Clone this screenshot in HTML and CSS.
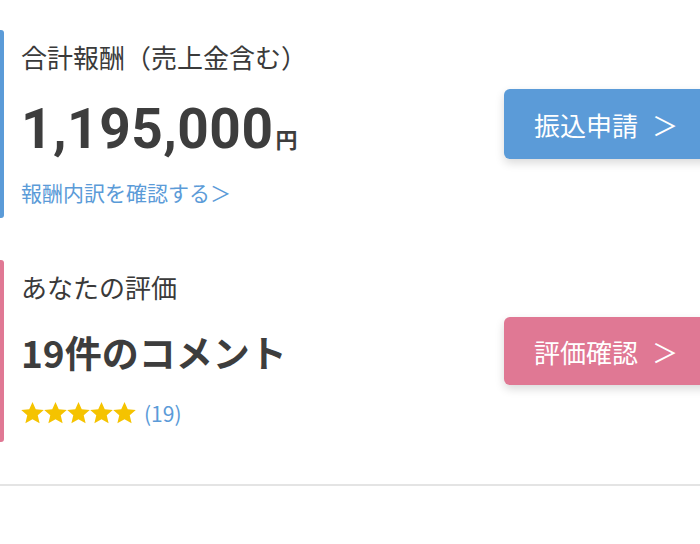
FILE: index.html
```html
<!DOCTYPE html>
<html lang="ja">
<head>
<meta charset="utf-8">
<link rel="stylesheet" href="styles.css">
</head>
<body>
<div class="page">
  <section class="card">
    <div class="bar bar-blue"></div>
    <div class="content">
      <div class="label">合計報酬（売上金含む）</div>
      <div class="amount">1,195,000<span class="yen">円</span></div>
      <a class="link">報酬内訳を確認する＞</a>
    </div>
    <div class="btn btn-blue">振込申請<span class="chev">＞</span></div>
  </section>
  <section class="card card2">
    <div class="bar bar-pink"></div>
    <div class="content">
      <div class="label">あなたの評価</div>
      <div class="comments">19件のコメント</div>
      <div class="rating">
        <span class="stars">
          <svg class="star" viewBox="1 1.2 22 21"><path d="M12 1.2l3.1 7 7.7.6-5.8 5.1 1.8 7.6L12 17.6l-6.8 3.9 1.8-7.6-5.8-5.1 7.7-.6z"/></svg>
          <svg class="star" viewBox="1 1.2 22 21"><path d="M12 1.2l3.1 7 7.7.6-5.8 5.1 1.8 7.6L12 17.6l-6.8 3.9 1.8-7.6-5.8-5.1 7.7-.6z"/></svg>
          <svg class="star" viewBox="1 1.2 22 21"><path d="M12 1.2l3.1 7 7.7.6-5.8 5.1 1.8 7.6L12 17.6l-6.8 3.9 1.8-7.6-5.8-5.1 7.7-.6z"/></svg>
          <svg class="star" viewBox="1 1.2 22 21"><path d="M12 1.2l3.1 7 7.7.6-5.8 5.1 1.8 7.6L12 17.6l-6.8 3.9 1.8-7.6-5.8-5.1 7.7-.6z"/></svg>
          <svg class="star" viewBox="1 1.2 22 21"><path d="M12 1.2l3.1 7 7.7.6-5.8 5.1 1.8 7.6L12 17.6l-6.8 3.9 1.8-7.6-5.8-5.1 7.7-.6z"/></svg>
        </span>
        <span class="count">(19)</span>
      </div>
    </div>
    <div class="btn btn-pink">評価確認<span class="chev">＞</span></div>
  </section>
  <hr class="divider">
</div>
</body>
</html>
```
FILE: styles.css
```css
html, body {
  margin: 0;
  padding: 0;
  background: #fff;
}
body {
  font-family: "Noto Sans CJK JP", "Noto Sans", sans-serif;
  color: #3c3c3c;
  width: 700px;
  height: 544px;
  overflow: hidden;
}
.page {
  padding-top: 30px;
}
.card {
  display: flex;
  align-items: stretch;
  height: 188px;
}
.card2 {
  margin-top: 42px;
  height: 182px;
}
.bar {
  width: 4px;
  border-radius: 0 3px 3px 0;
  flex: none;
}
.bar-blue { background: #5b9bd8; }
.bar-pink { background: #e07894; }
.content {
  flex: 1;
  padding-left: 17px;
  display: flex;
  flex-direction: column;
}
.label {
  font-size: 26px;
  line-height: 34px;
  margin-top: 10px;
  color: #3a3a3a;
}
.amount {
  font-family: "Roboto", "Noto Sans CJK JP", sans-serif;
  font-size: 55px;
  font-weight: 700;
  line-height: 60px;
  margin-top: 25px;
  color: #3d3d3d;
  letter-spacing: 0.5px;
}
.yen {
  font-family: "Noto Sans CJK JP", sans-serif;
  font-size: 22px;
  line-height: 1;
  margin-left: 2px;
  letter-spacing: 0;
}
.link {
  font-size: 21px;
  line-height: 28px;
  margin-top: 19px;
  color: #5b9bd8;
}
.comments {
  font-size: 37px;
  font-weight: 700;
  line-height: 48px;
  margin-top: 24px;
  color: #3d3d3d;
}
.rating {
  display: flex;
  align-items: center;
  height: 28px;
  margin-top: 23px;
}
.stars {
  display: flex;
}
.star {
  width: 23px;
  height: 22px;
  fill: #f5c300;
  display: block;
}
.count {
  font-size: 21px;
  color: #5b9bd8;
  margin-left: 8px;
  line-height: 28px;
}
.btn {
  align-self: center;
  width: 210px;
  height: 70px;
  margin-right: -14px;
  flex: none;
  border-radius: 6px 0 0 6px;
  color: #fff;
  font-size: 26px;
  display: flex;
  align-items: center;
  padding-left: 30px;
  box-sizing: border-box;
  box-shadow: 0 4px 10px rgba(0,0,0,0.15);
}
.btn-blue { background: #5b9bd8; }
.btn-pink { background: #e07894; height: 68px; }
.chev {
  margin-left: 14px;
  font-size: 26px;
}
.divider {
  border: 0;
  height: 2px;
  background: #e4e4e4;
  margin: 42px 0 0;
}
```
